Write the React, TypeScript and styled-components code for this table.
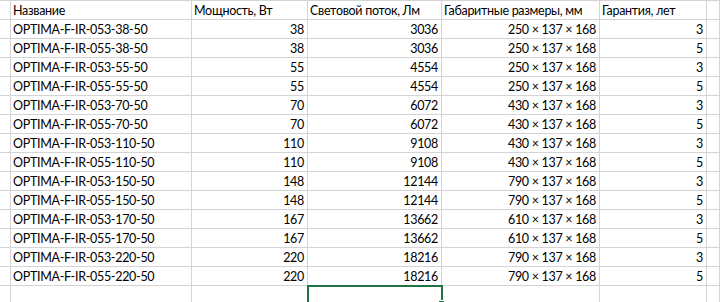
import styled, { createGlobalStyle } from 'styled-components';

const GlobalStyle = createGlobalStyle`
  html, body {
    margin: 0;
    padding: 0;
    background: #fff;
  }

  body {
    font-family: Lato, 'Liberation Sans', sans-serif;
    color: #000;
    overflow: hidden;
  }
`;

const Sheet = styled.div`
  position: relative;
  display: grid;
  grid-template-columns: 11px 181px 116px 134px 158px 107px 1fr;
  grid-auto-rows: 19px;
  width: 720px;
  border-top: 1px solid #d4d4d4;
`;

const Cell = styled.div<{ $align?: 'left' | 'right' }>`
  box-sizing: border-box;
  border-right: 1px solid #d4d4d4;
  border-bottom: 1px solid #d4d4d4;
  padding: 1px 3px 0 2px;
  font-size: 12.5px;
  letter-spacing: -0.3px;
  line-height: 18px;
  white-space: nowrap;
  overflow: hidden;
  text-align: ${({ $align }) => $align || 'left'};
`;

const Selection = styled.div`
  position: absolute;
  left: 307px;
  top: 284px;
  width: 136px;
  height: 20px;
  box-sizing: border-box;
  border: 2px solid #217346;

  &::after {
    content: '';
    position: absolute;
    right: -4px;
    bottom: -4px;
    width: 5px;
    height: 5px;
    background: #217346;
    border: 1px solid #fff;
  }
`;

const header = [
  'Название',
  'Мощность, Вт',
  'Световой поток, Лм',
  'Габаритные размеры, мм',
  'Гарантия, лет',
];

const rows: [string, number, number, string, number][] = [
  ['OPTIMA-F-IR-053-38-50', 38, 3036, '250 × 137 × 168', 3],
  ['OPTIMA-F-IR-055-38-50', 38, 3036, '250 × 137 × 168', 5],
  ['OPTIMA-F-IR-053-55-50', 55, 4554, '250 × 137 × 168', 3],
  ['OPTIMA-F-IR-055-55-50', 55, 4554, '250 × 137 × 168', 5],
  ['OPTIMA-F-IR-053-70-50', 70, 6072, '430 × 137 × 168', 3],
  ['OPTIMA-F-IR-055-70-50', 70, 6072, '430 × 137 × 168', 5],
  ['OPTIMA-F-IR-053-110-50', 110, 9108, '430 × 137 × 168', 3],
  ['OPTIMA-F-IR-055-110-50', 110, 9108, '430 × 137 × 168', 5],
  ['OPTIMA-F-IR-053-150-50', 148, 12144, '790 × 137 × 168', 3],
  ['OPTIMA-F-IR-055-150-50', 148, 12144, '790 × 137 × 168', 5],
  ['OPTIMA-F-IR-053-170-50', 167, 13662, '610 × 137 × 168', 3],
  ['OPTIMA-F-IR-055-170-50', 167, 13662, '610 × 137 × 168', 5],
  ['OPTIMA-F-IR-053-220-50', 220, 18216, '790 × 137 × 168', 3],
  ['OPTIMA-F-IR-055-220-50', 220, 18216, '790 × 137 × 168', 5],
];

const App = () => {
  return (
    <>
      <GlobalStyle />
      <Sheet>
        <Cell />
        {header.map((h) => (
          <Cell key={h}>{h}</Cell>
        ))}
        <Cell />

        {rows.map(([name, power, flux, size, warranty]) => (
          <div key={name} style={{ display: 'contents' }}>
            <Cell />
            <Cell>{name}</Cell>
            <Cell $align='right'>{power}</Cell>
            <Cell $align='right'>{flux}</Cell>
            <Cell $align='right'>{size}</Cell>
            <Cell $align='right'>{warranty}</Cell>
            <Cell />
          </div>
        ))}

        {Array.from({ length: 7 }).map((_, i) => (
          <Cell key={i} />
        ))}

        <Selection />
      </Sheet>
    </>
  );
};

export default App;
